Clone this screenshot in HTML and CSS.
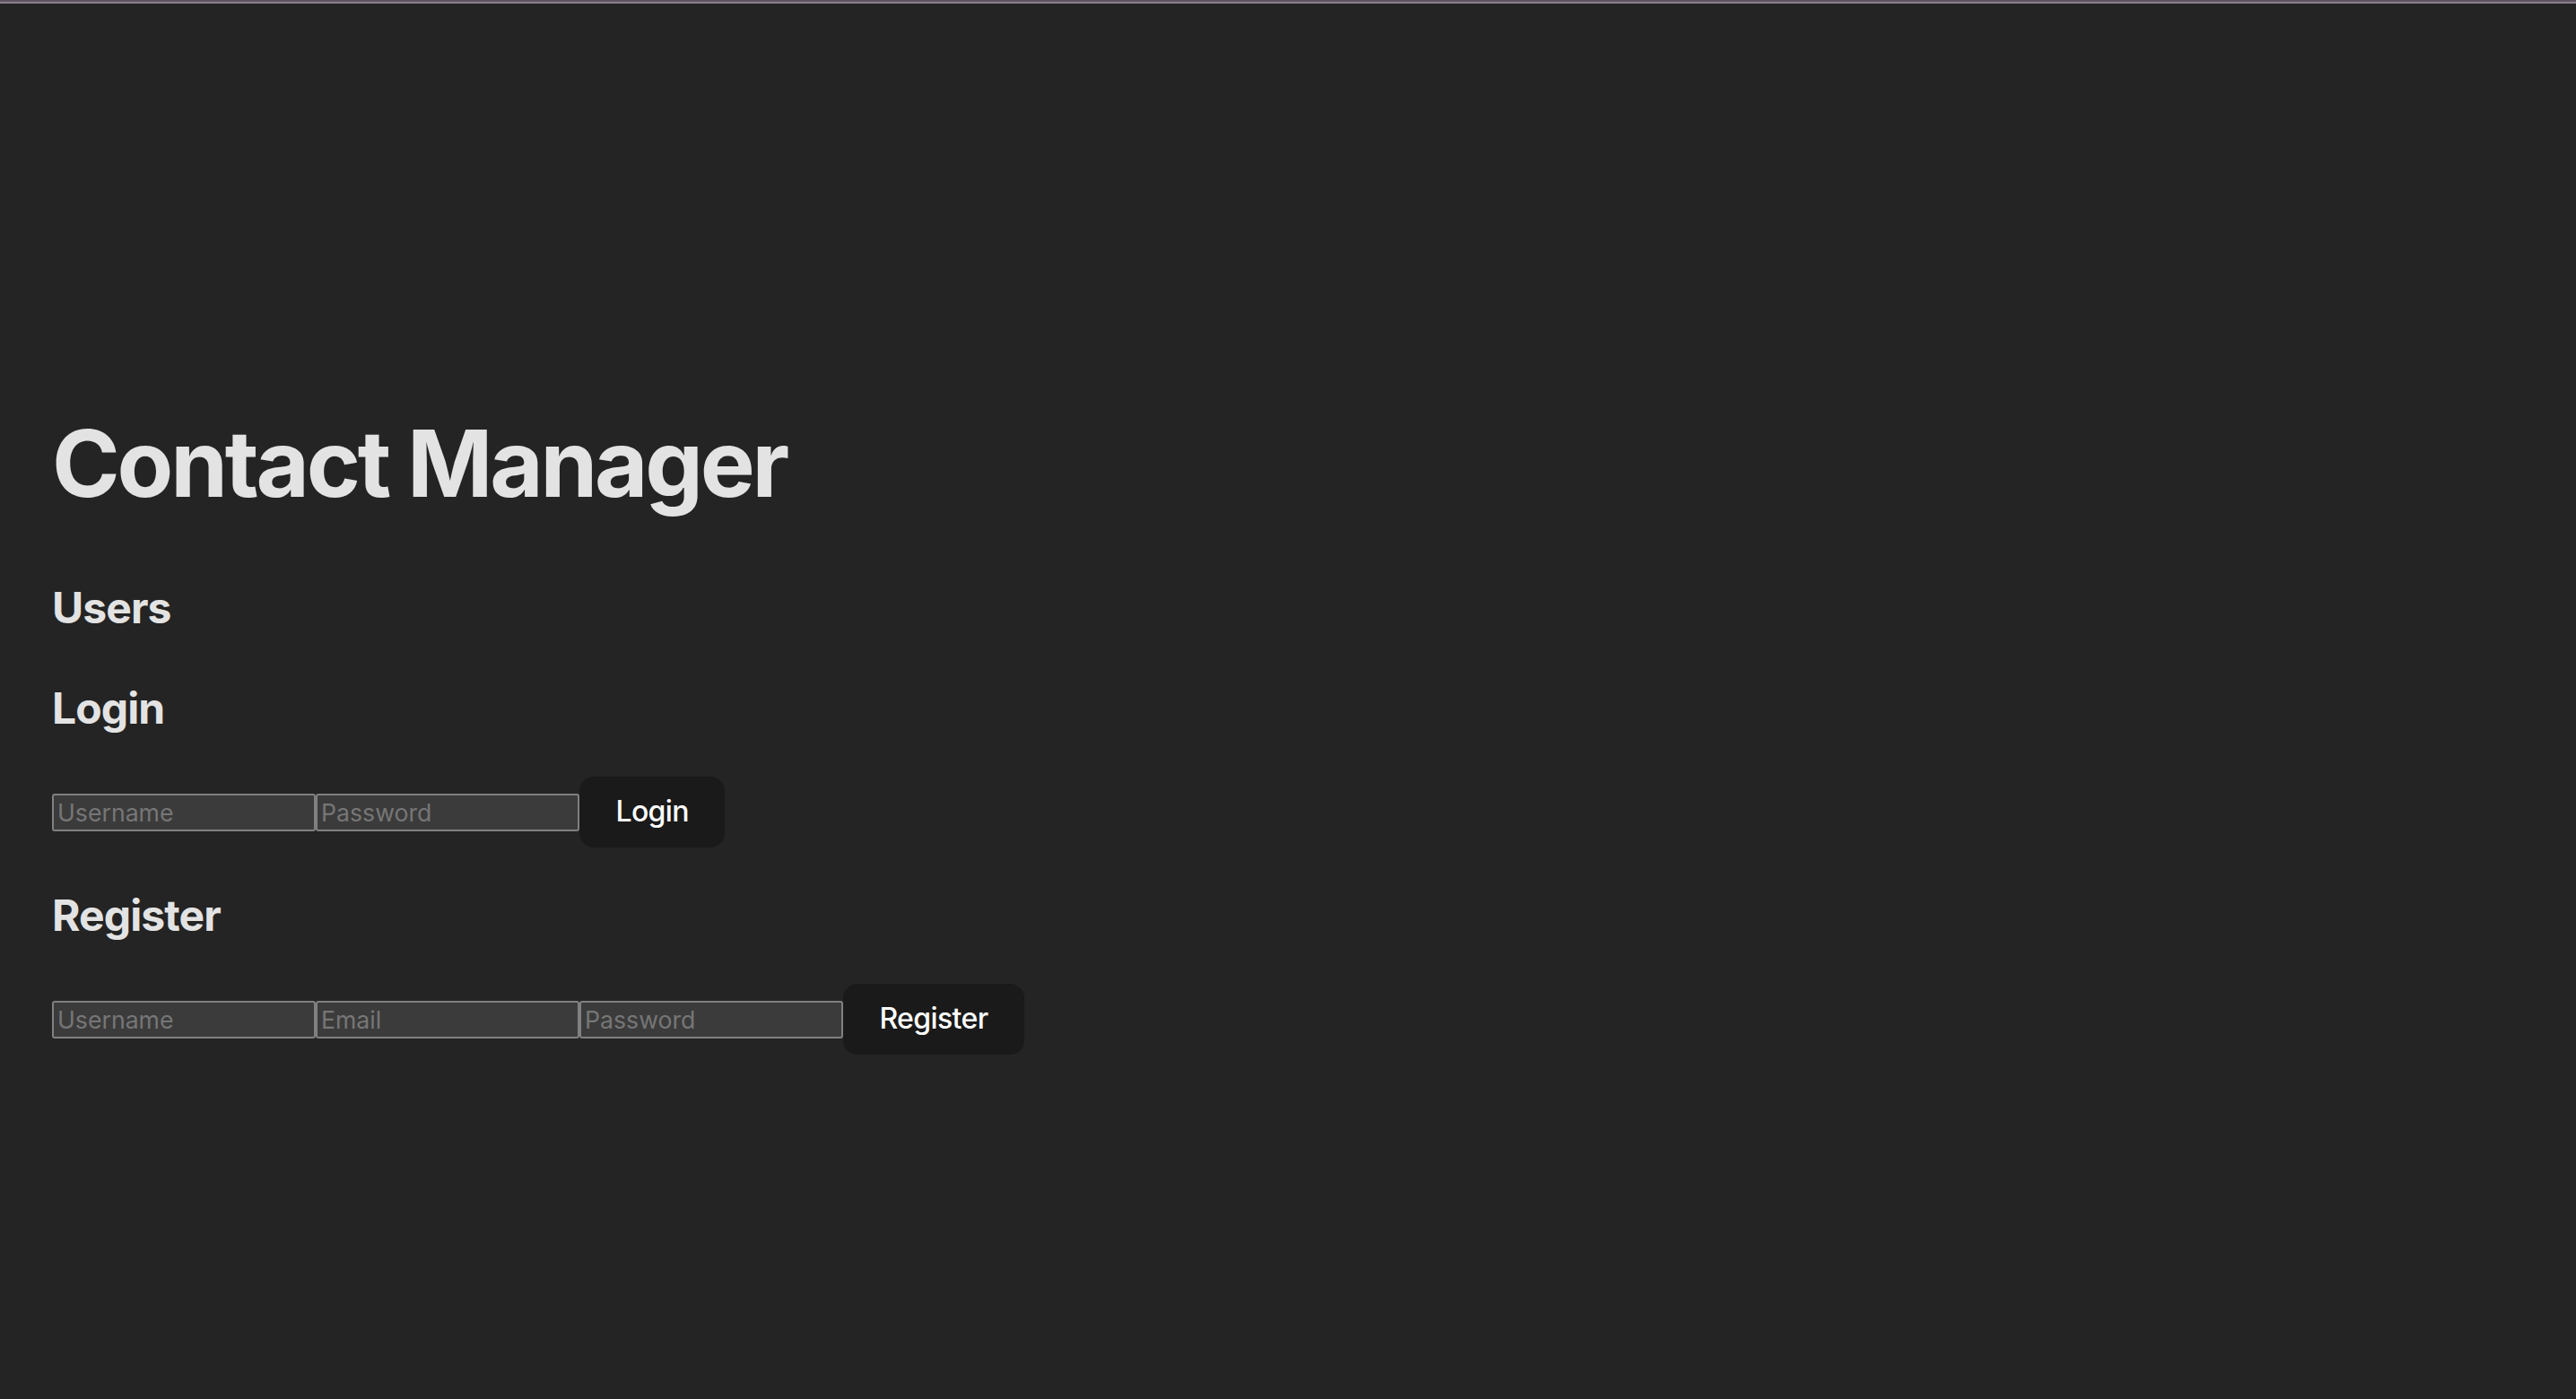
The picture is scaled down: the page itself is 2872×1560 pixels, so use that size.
FILE: index.html
```html
<!DOCTYPE html>
<html lang="en">
<head>
<meta charset="utf-8">
<title>Contact Manager</title>
<link rel="stylesheet" href="styles.css">
</head>
<body>
<div class="topbar"></div>
<div class="page">
  <div class="app">
    <h1 class="title">Contact Manager</h1>
    <h2 class="section">Users</h2>
    <h2 class="section">Login</h2>
    <form class="row"><input class="field" type="text" placeholder="Username"><input class="field" type="password" placeholder="Password"><button class="btn" type="button">Login</button></form>
    <h2 class="section">Register</h2>
    <form class="row"><input class="field" type="text" placeholder="Username"><input class="field" type="email" placeholder="Email"><input class="field" type="password" placeholder="Password"><button class="btn" type="button">Register</button></form>
  </div>
</div>
</body>
</html>
```
FILE: styles.css
```css
html, body {
  margin: 0;
  padding: 0;
  background: #242424;
}

body {
  font-family: Inter, "Noto Sans", "Liberation Sans", sans-serif;
  font-size: 32px;
  line-height: 1.5;
  color: #e3e3e3;
}

.topbar {
  height: 4px;
  background: linear-gradient(to bottom, #5e5461 0, #5e5461 2px, #8a8089 2px, #8a8089 4px);
}

.page {
  display: flex;
  align-items: center;
  min-height: 1556px;
}

.app {
  padding: 66px 58px 62px;
}

.title {
  font-size: 102.4px;
  line-height: 1.1;
  font-weight: 700;
  margin: 68.6px 0;
  letter-spacing: -3.2px;
}

.section {
  font-size: 48px;
  line-height: 72px;
  font-weight: 700;
  margin: 39.84px 0;
  letter-spacing: -0.9px;
}

.row {
  display: flex;
  align-items: baseline;
  margin: 39.84px 0 0;
}

.field {
  box-sizing: border-box;
  width: 294px;
  height: 42px;
  margin: 0;
  padding: 2px 4px;
  border: 2px solid #808080;
  border-radius: 3px;
  background: #3b3b3b;
  color: #e3e3e3;
  font-family: Inter, "Noto Sans", sans-serif;
  font-size: 26.67px;
  outline: none;
}

.field::placeholder {
  color: #767676;
}

.btn {
  box-sizing: border-box;
  margin: 0;
  padding: 19.2px 38.4px;
  border: 2px solid transparent;
  border-radius: 16px;
  background: #1a1a1a;
  color: #ffffff;
  font-family: Inter, "Noto Sans", sans-serif;
  font-size: 32px;
  font-weight: 500;
  line-height: 36.6px;
  letter-spacing: -0.6px;
  cursor: pointer;
}
```
